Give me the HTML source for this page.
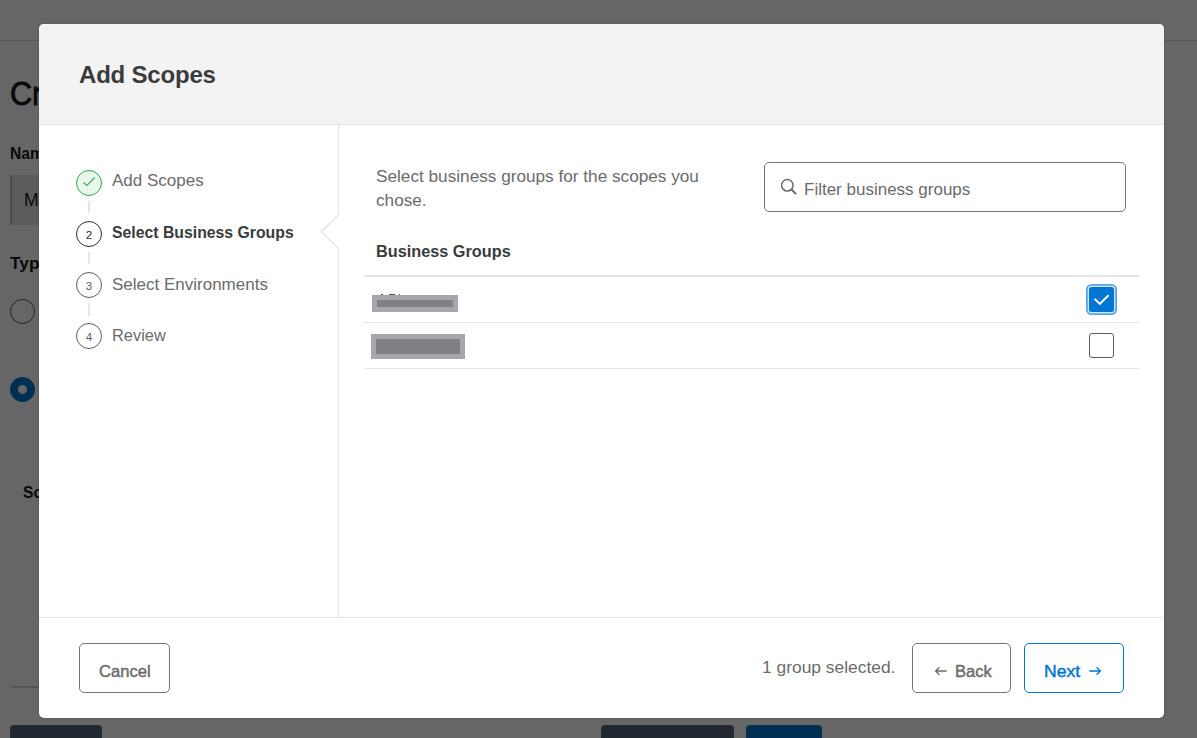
<!DOCTYPE html>
<html lang="en">
<head>
<meta charset="utf-8">
<title>Add Scopes</title>
<style>
*{box-sizing:border-box;margin:0;padding:0}
html,body{width:1197px;height:738px;overflow:hidden;background:#fff;font-family:"Liberation Sans",sans-serif;color:#3a3b3c}
.abs{position:absolute}
.nw{white-space:nowrap;transform-origin:0 50%}
/* ---------- background page ---------- */
#bg{position:absolute;left:0;top:0;width:1197px;height:738px;background:#fff;overflow:hidden}
#bg .topline{left:0;top:40px;width:1197px;height:1px;background:#d4d4d4}
#bg h1{left:10px;top:71px;font-size:34px;font-weight:400;color:#181818;line-height:44px;-webkit-text-stroke:.8px #181818;transform:scaleX(.9)}
#bg .lbl{font-weight:700;font-size:17px;color:#181818;line-height:20px;transform:scaleX(.94)}
#bg .inp{left:10px;top:175px;width:300px;height:50px;background:#e6e6e6;border-left:2px solid #bebebe}
#bg .inp span{position:absolute;left:12px;top:15px;font-size:17.5px;color:#181818;line-height:20px}
#bg .radio{left:10px;top:299px;width:25px;height:25px;border-radius:50%;border:1px solid #555;background:#fff}
#bg .radio.on{top:377px;border:8px solid #0176d3;background:#fff}
#bg .hr{left:10px;top:686px;width:1100px;height:2px;background:#d8d8d8}
#bg .btn{top:725px;height:40px;border-radius:4px}
#overlay{position:absolute;left:0;top:0;width:1197px;height:738px;background:rgba(0,0,0,.6)}
/* ---------- modal ---------- */
#modal{position:absolute;left:39px;top:24px;width:1125px;height:694px;background:#fff;border-radius:5px;overflow:hidden;box-shadow:0 0 2px rgba(0,0,0,.25)}
#mhead{left:0;top:0;width:1125px;height:101px;background:#f3f3f3;border-bottom:1px solid #e5e5e5}
#mhead h2{position:absolute;left:40px;top:35px;font-size:24px;line-height:32px;font-weight:700;color:#3a3b3c;letter-spacing:-.2px}
#side{left:0;top:101px;width:300px;height:493px;border-right:1px solid #e5e5e5}
#mfoot{left:0;top:593px;width:1125px;height:101px;border-top:1px solid #e5e5e5}
.step{position:absolute;left:37px;height:26px;white-space:nowrap}
.step .c{position:absolute;left:0;top:0;width:26px;height:26px;border-radius:50%;border:1px solid #5c5c5c;font-size:11.6px;line-height:26px;text-align:center;color:#5c5c5c;background:#fff}
.step .t{position:absolute;left:36px;top:1px;font-size:17px;line-height:24px;color:#6b6b6b}
.step.cur .c{border-color:#2e2e2e;color:#2e2e2e}
.step.cur .t{font-weight:700;color:#3a3b3c;transform:scaleX(.929);top:-.4px}
.conn{position:absolute;left:49px;width:2px;height:12px;background:#e5e5e5}
.btnm{position:absolute;top:25px;height:50px;border:1px solid #747474;border-radius:5px;background:#fff;font-size:17px;color:#6b6b6b}
.btnm span{position:absolute;top:16px;line-height:24px;-webkit-text-stroke:.45px currentColor}
.btnm svg{position:absolute;top:21.5px}
</style>
</head>
<body>
<div id="bg">
  <div class="abs topline"></div>
  <h1 class="abs nw">Create Team</h1>
  <div class="abs lbl nw" style="left:10px;top:144px;transform:scaleX(.917)">Name</div>
  <div class="abs inp"><span>My team</span></div>
  <div class="abs lbl nw" style="left:10px;top:254px;transform:scaleX(1.02)">Type</div>
  <div class="abs radio"></div>
  <div class="abs radio on"></div>
  <div class="abs lbl nw" style="left:22.7px;top:483px;transform:scaleX(.92)">Scopes</div>
  <div class="abs hr"></div>
  <div class="abs btn" style="left:10px;width:92px;background:#556478"></div>
  <div class="abs btn" style="left:601px;width:133px;background:#556478"></div>
  <div class="abs btn" style="left:746px;width:76px;background:#0176d3"></div>
</div>
<div id="overlay"></div>

<div id="modal">
  <div id="mhead" class="abs"><h2 class="nw">Add Scopes</h2></div>

  <div id="side" class="abs">
    <div class="step" style="top:45px">
      <div class="c" style="border-color:#2fa84f;background:#e9f6ec">
        <svg width="24" height="24" viewBox="0 0 24 24" style="position:absolute;left:0;top:0"><path d="M6.8 12 L10.1 14.4 L17.4 6.8" fill="none" stroke="#2fa84f" stroke-width="1.15" stroke-linecap="round" stroke-linejoin="round"/></svg>
      </div>
      <div class="t nw" style="top:-.7px">Add Scopes</div>
    </div>
    <div class="conn" style="top:76px"></div>
    <div class="step cur" style="top:96px"><div class="c">2</div><div class="t nw">Select Business Groups</div></div>
    <div class="conn" style="top:127px"></div>
    <div class="step" style="top:147px"><div class="c">3</div><div class="t nw">Select Environments</div></div>
    <div class="conn" style="top:178px;height:13px"></div>
    <div class="step" style="top:198.3px"><div class="c">4</div><div class="t nw" style="transform:scaleX(.964)">Review</div></div>
    <!-- pointer notch -->
    <svg class="abs" style="left:281px;top:88px" width="20" height="38" viewBox="0 0 20 38"><rect x="18" y="2" width="2" height="33" fill="#fff"/><path d="M18.5 1.6 L1.4 18.6 L18.5 35.4" fill="#fff" stroke="#e0e0e0" stroke-width="1.25"/></svg>
  </div>

  <!-- content -->
  <div class="abs" style="left:337px;top:139.5px;width:370px;font-size:17.2px;line-height:24.5px;color:#6b6b6b">Select business groups for the scopes you chose.</div>
  <div class="abs" style="left:725px;top:138px;width:362px;height:50px;border:1px solid #747474;border-radius:5px;background:#fff">
    <svg class="abs" style="left:14px;top:14px" width="19" height="19" viewBox="0 0 19 19"><circle cx="8.3" cy="8.3" r="5.75" fill="none" stroke="#6b6b6b" stroke-width="1.5"/><path d="M12.5 12.5 L16.6 16.6" stroke="#6b6b6b" stroke-width="2" stroke-linecap="round"/></svg>
    <div class="abs nw" style="left:39px;top:14.5px;font-size:17px;line-height:24px;color:#6b6b6b">Filter business groups</div>
  </div>
  <div class="abs nw" style="left:337px;top:215.5px;font-size:17px;line-height:24px;font-weight:700;color:#3a3b3c;transform:scaleX(.957)">Business Groups</div>
  <div class="abs" style="left:325px;top:251px;width:775px;height:2px;background:#e5e5e5"></div>
  <div class="abs" style="left:325px;top:298px;width:775px;height:1px;background:#e5e5e5"></div>
  <div class="abs" style="left:325px;top:344px;width:775px;height:1px;background:#e5e5e5"></div>
  <!-- redacted names -->
  <div class="abs" style="left:342px;top:270px;width:2px;height:1px;background:#555"></div>
  <div class="abs" style="left:350px;top:270px;width:6px;height:1px;background:#555"></div>
  <div class="abs" style="left:360px;top:270px;width:1px;height:1px;background:#555"></div>
  <div class="abs" style="left:333px;top:270.6px;width:86px;height:17.4px;background:#a6a7ab"><div class="abs" style="left:5px;top:5px;width:76px;height:7.4px;background:#808185"></div></div>
  <div class="abs" style="left:332px;top:310.3px;width:94px;height:24.7px;background:#a6a7ab"><div class="abs" style="left:5px;top:4.7px;width:84px;height:15px;background:#808185"></div></div>
  <!-- checkboxes -->
  <div class="abs" style="left:1050px;top:263px;width:25px;height:25px;border-radius:2.5px;background:#0176d3;box-shadow:0 0 0 1.2px #d4e7f9,0 0 0 3px #5ba4e7">
    <svg width="25" height="25" viewBox="0 0 25 25" style="position:absolute;left:0;top:0"><path d="M5.6 11.9 L10.8 16.9 L19.6 8.2" fill="none" stroke="#fff" stroke-width="2" stroke-linecap="butt" stroke-linejoin="miter"/></svg>
  </div>
  <div class="abs" style="left:1050px;top:309px;width:25px;height:25px;border-radius:3px;border:1px solid #5c5c5c;background:#fff"></div>

  <div id="mfoot" class="abs">
    <div class="btnm" style="left:40px;width:91px"><span class="nw" style="left:18.5px;transform:scaleX(.975)">Cancel</span></div>
    <div class="abs nw" style="left:723px;top:36.5px;font-size:17.4px;line-height:24px;color:#6b6b6b">1 group selected.</div>
    <div class="btnm" style="left:873px;width:99px">
      <svg style="left:21px" width="14" height="10" viewBox="0 0 14 10"><path d="M12.6 5 H1.6 M5.4 1.2 L1.6 5 L5.4 8.8" fill="none" stroke="#6b6b6b" stroke-width="1.3" stroke-linejoin="miter"/></svg>
      <span class="nw" style="left:42px;transform:scaleX(.97)">Back</span>
    </div>
    <div class="btnm" style="left:985px;width:100px;border-color:#0176d3;color:#0176d3">
      <span class="nw" style="left:19px;transform:scaleX(1.03)">Next</span>
      <svg style="left:62.5px" width="14" height="10" viewBox="0 0 14 10"><path d="M1.4 5 H12.4 M8.6 1.2 L12.4 5 L8.6 8.8" fill="none" stroke="#0176d3" stroke-width="1.3" stroke-linejoin="miter"/></svg>
    </div>
  </div>
</div>
</body>
</html>
